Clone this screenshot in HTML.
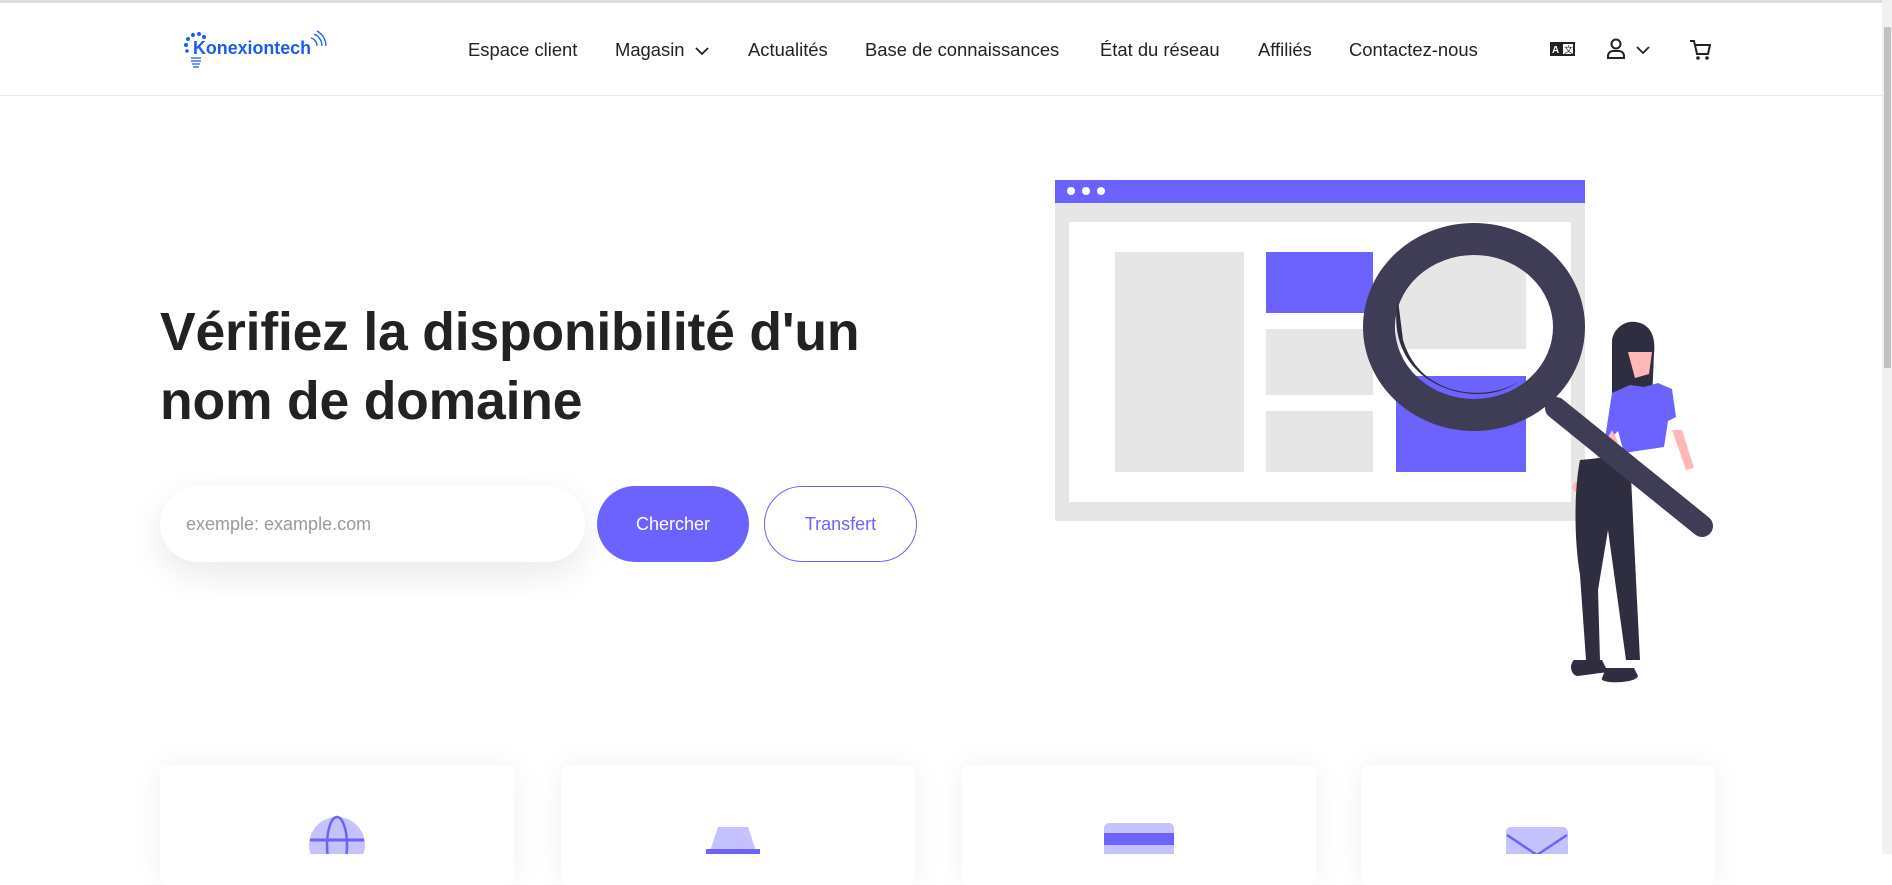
<!DOCTYPE html>
<html><head><meta charset="utf-8"><style>
*{margin:0;padding:0;box-sizing:border-box}
body{width:1892px;height:854px;overflow:hidden;background:#fff;font-family:"Liberation Sans",Arial,sans-serif;color:#222;position:relative}
.abs{position:absolute}
.topline{left:0;top:0;width:1882px;height:3px;background:#ddd}
.header{left:0;top:3px;width:1882px;height:93px;border-bottom:1px solid #e8e8e8}
.nav{top:39px;font-size:18.4px;color:#222;white-space:nowrap}
h1{position:absolute;left:160px;top:298px;font-size:53.5px;line-height:69px;font-weight:bold;color:#222;letter-spacing:-0.2px}
.input{left:160px;top:486px;width:425px;height:76px;border-radius:38px;background:#fff;box-shadow:0 12px 35px rgba(0,0,0,0.09);font-size:18px;color:#999;padding:28px 0 0 26px}
.btn{top:486px;height:76px;border-radius:38px;font-size:18px;text-align:center;line-height:76px}
.card{top:765px;width:354px;height:120px;background:#fff;border-radius:6px;box-shadow:0 0 30px rgba(0,0,0,0.06)}
.scroll{left:1882px;top:0;width:10px;height:854px;background:#f1f1f1}
.thumb{left:1884px;top:27px;width:7px;height:341px;background:#c1c1c1}
</style></head><body>
<div class="abs topline"></div>
<div class="abs header"></div>
<div class="abs scroll"></div><div class="abs thumb"></div>
<svg class="abs" style="left:183px;top:30px" width="145" height="42" viewBox="0 0 145 42">
<g fill="#1a5cf0"><circle cx="10" cy="5" r="2"/><circle cx="5" cy="9" r="2"/><circle cx="3" cy="15" r="2"/><circle cx="16" cy="4" r="2"/><circle cx="21" cy="7" r="2"/><circle cx="4" cy="21" r="1.8"/></g>
<g stroke="#1a5cf0" stroke-width="1.3" fill="none"><path d="M8 28h10M8 31h10M9 34h8M10 37h6"/><path d="M128 8a8 8 0 0 1 6 8M131 4a13 13 0 0 1 8 12M134 1a17 17 0 0 1 9 15"/></g>
<text x="10" y="24" font-family="Liberation Sans" font-weight="bold" font-size="18" fill="#1a5cf0" textLength="118" lengthAdjust="spacingAndGlyphs">Konexiontech</text>
</svg>
<div class="abs nav" style="left:468px">Espace client</div>
<div class="abs nav" style="left:615px">Magasin <svg width="16" height="10" viewBox="0 0 16 10" style="margin-left:4px"><path d="M2 2l6 6 6-6" stroke="#222" stroke-width="1.8" fill="none"/></svg></div>
<div class="abs nav" style="left:748px">Actualités</div>
<div class="abs nav" style="left:865px">Base de connaissances</div>
<div class="abs nav" style="left:1100px">État du réseau</div>
<div class="abs nav" style="left:1258px">Affiliés</div>
<div class="abs nav" style="left:1349px">Contactez-nous</div>
<svg class="abs" style="left:1550px;top:42px" width="25" height="14" viewBox="0 0 25 14"><rect x="0" y="0" width="25" height="14" fill="#222"/><rect x="13" y="2" width="10" height="10" fill="#fff"/><text x="2" y="11" font-size="10" font-weight="bold" fill="#fff" font-family="Liberation Sans">A</text><text x="14" y="11" font-size="9" fill="#222" font-family="Liberation Sans, Noto Sans CJK SC, sans-serif">文</text></svg>
<svg class="abs" style="left:1606px;top:38px" width="46" height="22" viewBox="0 0 46 22"><circle cx="10" cy="6" r="4.5" stroke="#222" stroke-width="2" fill="none"/><path d="M2 20v-2a5 5 0 0 1 5-5h6a5 5 0 0 1 5 5v2z" stroke="#222" stroke-width="2" fill="none"/><path d="M31 9l6 6 6-6" stroke="#222" stroke-width="1.8" fill="none"/></svg>
<svg class="abs" style="left:1689px;top:39px" width="22" height="22" viewBox="0 0 22 22"><path d="M1 2h4l3 13h11l2-9H6" stroke="#222" stroke-width="2" fill="none"/><circle cx="9" cy="19" r="1.8" fill="#222"/><circle cx="18" cy="19" r="1.8" fill="#222"/></svg>

<h1>Vérifiez la disponibilité d'un<br>nom de domaine</h1>
<div class="abs input">exemple: example.com</div>
<div class="abs btn" style="left:597px;width:152px;background:#6c63ff;color:#fff">Chercher</div>
<div class="abs btn" style="left:764px;width:153px;border:1px solid #6c63ff;color:#6c63ff;line-height:74px">Transfert</div>

<svg class="abs" style="left:0;top:0" width="1892" height="854" viewBox="0 0 1892 854">
<rect x="1055" y="180" width="530" height="341" fill="#e6e6e6"/>
<rect x="1055" y="180" width="530" height="23" fill="#6c63ff"/>
<circle cx="1071" cy="191" r="4" fill="#fff"/><circle cx="1086" cy="191" r="4" fill="#fff"/><circle cx="1101" cy="191" r="4" fill="#fff"/>
<rect x="1069" y="222" width="502" height="280" fill="#fff"/>
<rect x="1115" y="252" width="129" height="220" fill="#e6e6e6"/>
<rect x="1266" y="252" width="107" height="61" fill="#6c63ff"/>
<rect x="1266" y="329" width="107" height="66" fill="#e6e6e6"/>
<rect x="1266" y="411" width="107" height="61" fill="#e6e6e6"/>
<rect x="1396" y="252" width="130" height="97" fill="#e6e6e6"/>
<rect x="1396" y="376" width="130" height="96" fill="#6c63ff"/>
<!-- woman -->
<path d="M1612 342c0-12 12-22 24-20 14 2 20 14 18 32l-2 46h-40z" fill="#2f2e41"/>
<path d="M1628 352h24l-3 22-14 4z" fill="#ffb8b8"/>
<path d="M1612 393l18-8 14 2 14 -4 14 6 4 28-8 4-4 26-40 6 -6-22-14 14z" fill="#6c63ff"/>
<path d="M1612 430l-28 50 4 4 30-42z M1672 430l14 40 8-2-12-38z" fill="#ffb8b8"/>
<path d="M1576 482c-4 2-6 8 0 10 4 0 6-4 6-8z" fill="#ffb8b8"/>
<path d="M1580 460c-6 30-6 80 0 115l6 85h14l-2-70 10-60 18 130h14l-6-120-4-85z" fill="#2f2e41"/>
<path d="M1574 660h28l6 12-30 4c-6 0-10-10-4-16z M1606 668h28l4 8c-2 8-40 8-36 2z" fill="#2f2e41"/>
<path d="M1700 525l10 8" stroke="#ffb8b8" stroke-width="6"/>
<!-- magnifier -->
<line x1="1556" y1="408" x2="1702" y2="526" stroke="#3f3d56" stroke-width="22" stroke-linecap="round"/>
<ellipse cx="1474" cy="327" rx="95" ry="88" fill="none" stroke="#3f3d56" stroke-width="32"/>
<path d="M1398 300c-8 40 10 80 60 92 30 6 50-2 63-12-30 22-100 20-118-40z" fill="#2f2e41"/>
</svg>

<div class="abs card" style="left:160px"></div>
<div class="abs card" style="left:561px"></div>
<div class="abs card" style="left:962px"></div>
<div class="abs card" style="left:1361px"></div>
<svg class="abs" style="left:0;top:800px" width="1892" height="54" viewBox="0 800 1892 54">
<circle cx="337" cy="845" r="28" fill="#c5c2ff"/><line x1="310" y1="840" x2="364" y2="840" stroke="#6c63ff" stroke-width="3"/><ellipse cx="337" cy="845" rx="10" ry="28" fill="none" stroke="#6c63ff" stroke-width="2.5"/>
<path d="M718 827h30l10 30h-50z" fill="#c5c2ff"/><rect x="706" y="849" width="54" height="6" fill="#6c63ff"/>
<rect x="1104" y="823" width="70" height="40" rx="5" fill="#c5c2ff"/><rect x="1104" y="833" width="70" height="12" fill="#6c63ff"/>
<rect x="1506" y="827" width="62" height="40" rx="5" fill="#c5c2ff"/><path d="M1507 835l30 20 30-20" stroke="#6c63ff" stroke-width="2.5" fill="none"/>
</svg>
</body></html>
